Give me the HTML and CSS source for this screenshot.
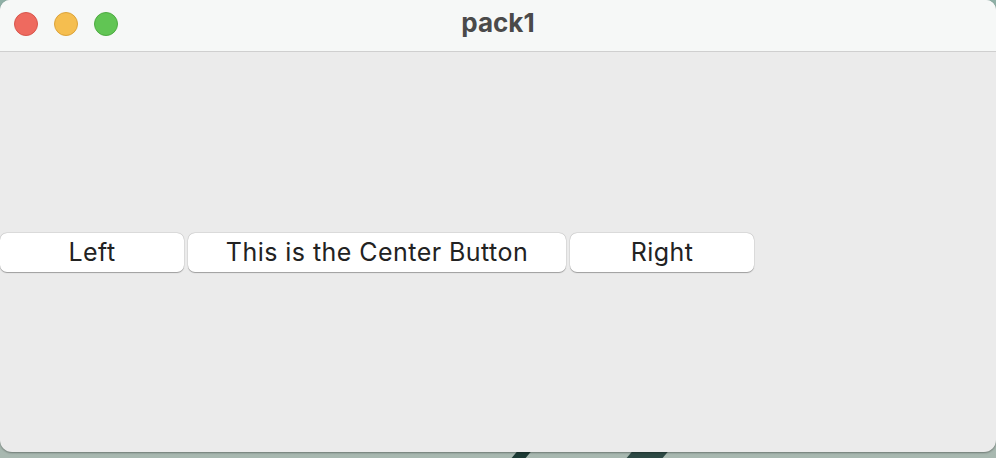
FILE: index.html
```html
<!DOCTYPE html>
<html>
<head>
<meta charset="utf-8">
<link rel="stylesheet" href="styles.css">
</head>
<body>
<div class="desktop">
  <div class="window">
    <div class="titlebar">
      <div class="lights">
        <span class="light red"></span>
        <span class="light yellow"></span>
        <span class="light green"></span>
      </div>
      <div class="title">pack1</div>
    </div>
    <div class="content">
      <div class="row">
        <button class="btn w-side">Left</button>
        <button class="btn w-center">This is the Center Button</button>
        <button class="btn w-side">Right</button>
      </div>
    </div>
  </div>
</div>
</body>
</html>
```
FILE: styles.css
```css
html, body {
  margin: 0;
  padding: 0;
  width: 996px;
  height: 458px;
  overflow: hidden;
}
.desktop {
  width: 996px;
  height: 458px;
  background: linear-gradient(180deg, #8fb0a6 0%, #a8b8b0 100%);
  position: relative;
  overflow: hidden;
}
.desktop::before {
  content: "";
  position: absolute;
  left: 515px;
  bottom: 0;
  width: 14px;
  height: 8px;
  background: #1d3b35;
  transform: skewX(-40deg);
}
.desktop::after {
  content: "";
  position: absolute;
  left: 630px;
  bottom: 0;
  width: 36px;
  height: 8px;
  background: #2e4a45;
  transform: skewX(-40deg);
}
.window {
  width: 996px;
  height: 452px;
  background: #ebebeb;
  border-radius: 10px 10px 12px 12px;
  overflow: hidden;
  display: flex;
  flex-direction: column;
  box-shadow: 0 1px 2px rgba(0,0,0,0.35);
  position: relative;
  z-index: 1;
}
.titlebar {
  height: 51px;
  flex: 0 0 51px;
  background: #f6f8f7;
  border-bottom: 1px solid #cfcfcf;
  display: flex;
  align-items: center;
  position: relative;
}
.lights {
  display: flex;
  gap: 16px;
  padding-left: 14px;
  margin-top: -3px;
}
.light {
  width: 24px;
  height: 24px;
  border-radius: 50%;
  box-sizing: border-box;
  display: block;
}
.red { background: #ee6a5f; border: 1px solid #d8564c; }
.yellow { background: #f5be4f; border: 1px solid #dca33a; }
.green { background: #61c554; border: 1px solid #4eab42; }
.title {
  position: absolute;
  left: 0;
  right: 0;
  top: 8px;
  text-align: center;
  font-family: "Inter", "Liberation Sans", sans-serif;
  font-weight: 700;
  font-size: 26px;
  line-height: 30px;
  color: #4a4a4a;
  pointer-events: none;
}
.content {
  flex: 1;
  display: flex;
  align-items: center;
}
.row {
  display: flex;
  gap: 4px;
  margin-top: 1px;
}
.btn {
  height: 39px;
  background: #ffffff;
  border: none;
  border-radius: 7px;
  box-shadow: 0 0.5px 1px rgba(0,0,0,0.3), 0 0 0 0.5px rgba(0,0,0,0.08);
  font-family: "Inter", "Liberation Sans", sans-serif;
  font-size: 25px;
  letter-spacing: 0.45px;
  color: #222222;
  padding: 0;
  line-height: 37px;
}
.w-side { width: 184px; }
.w-center { width: 378px; }
```
